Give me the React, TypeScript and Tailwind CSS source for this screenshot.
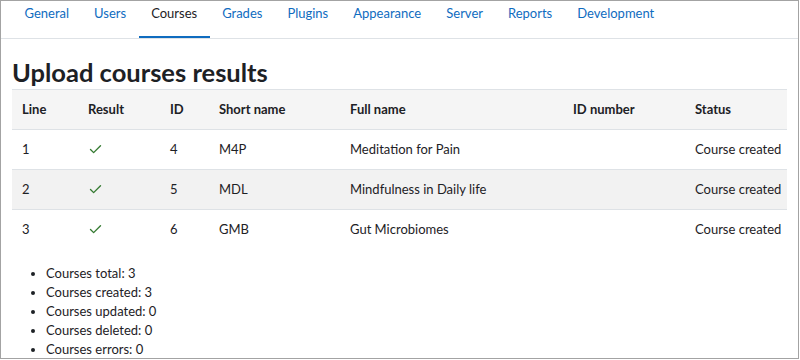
import { Check } from "lucide-react";

const tabs = ["General", "Users", "Courses", "Grades", "Plugins", "Appearance", "Server", "Reports", "Development"];

const rows = [
    { line: "1", id: "4", short: "M4P", full: "Meditation for Pain", status: "Course created" },
    { line: "2", id: "5", short: "MDL", full: "Mindfulness in Daily life", status: "Course created" },
    { line: "3", id: "6", short: "GMB", full: "Gut Microbiomes", status: "Course created" },
];

const stats = [
    "Courses total: 3",
    "Courses created: 3",
    "Courses updated: 0",
    "Courses deleted: 0",
    "Courses errors: 0",
];

const App = () => {
    return (
        <div
            className="w-[799px] h-[359px] overflow-hidden border border-[#a3a3a3] bg-white text-[13px] text-[#1d2125]"
            style={{ fontFamily: 'Lato, "Noto Sans", sans-serif' }}
        >
            {/* TABS */}
            <div className="flex h-[38px] border-b border-[#dee2e6] pl-[11px]">
                {tabs.map((t) => (
                    <div
                        key={t}
                        className={
                            "px-[12.5px] pt-[3px] leading-[18px] border-b-2 " +
                            (t === "Courses" ? "border-[#0f6cbf] text-[#1d2125]" : "border-transparent text-[#0f6cbf]")
                        }
                    >
                        {t}
                    </div>
                ))}
            </div>

            <div className="px-[11px]">
                <h2 className="mt-[18px] text-[25.5px] font-bold leading-[30px]">Upload courses results</h2>

                {/* TABLE */}
                <table className="mt-[2px] w-full table-fixed border-collapse">
                    <colgroup>
                        <col className="w-[66px]" />
                        <col className="w-[82px]" />
                        <col className="w-[49px]" />
                        <col className="w-[131px]" />
                        <col className="w-[223px]" />
                        <col className="w-[122px]" />
                        <col />
                    </colgroup>
                    <thead>
                        <tr className="h-[40px] bg-[#f5f5f5] border-t border-[#dee2e6] text-left">
                            {["Line", "Result", "ID", "Short name", "Full name", "ID number", "Status"].map((h) => (
                                <th key={h} className="px-[10px] font-bold">
                                    {h}
                                </th>
                            ))}
                        </tr>
                    </thead>
                    <tbody>
                        {rows.map((r, i) => (
                            <tr
                                key={r.line}
                                className={"h-[40px] border-t border-[#dee2e6] " + (i % 2 === 1 ? "bg-[#f2f2f2]" : "bg-white")}
                            >
                                <td className="px-[10px]">{r.line}</td>
                                <td className="px-[10px]">
                                    <Check size={15} strokeWidth={2.2} className="text-[#357a32]" />
                                </td>
                                <td className="px-[10px]">{r.id}</td>
                                <td className="px-[10px]">{r.short}</td>
                                <td className="px-[10px]">{r.full}</td>
                                <td className="px-[10px]"></td>
                                <td className="px-[10px] whitespace-nowrap">{r.status}</td>
                            </tr>
                        ))}
                    </tbody>
                </table>

                {/* SUMMARY */}
                <ul className="mt-[14px] list-disc pl-[34px] leading-[19px]">
                    {stats.map((s) => (
                        <li key={s}>{s}</li>
                    ))}
                </ul>
            </div>
        </div>
    );
};

export default App;
